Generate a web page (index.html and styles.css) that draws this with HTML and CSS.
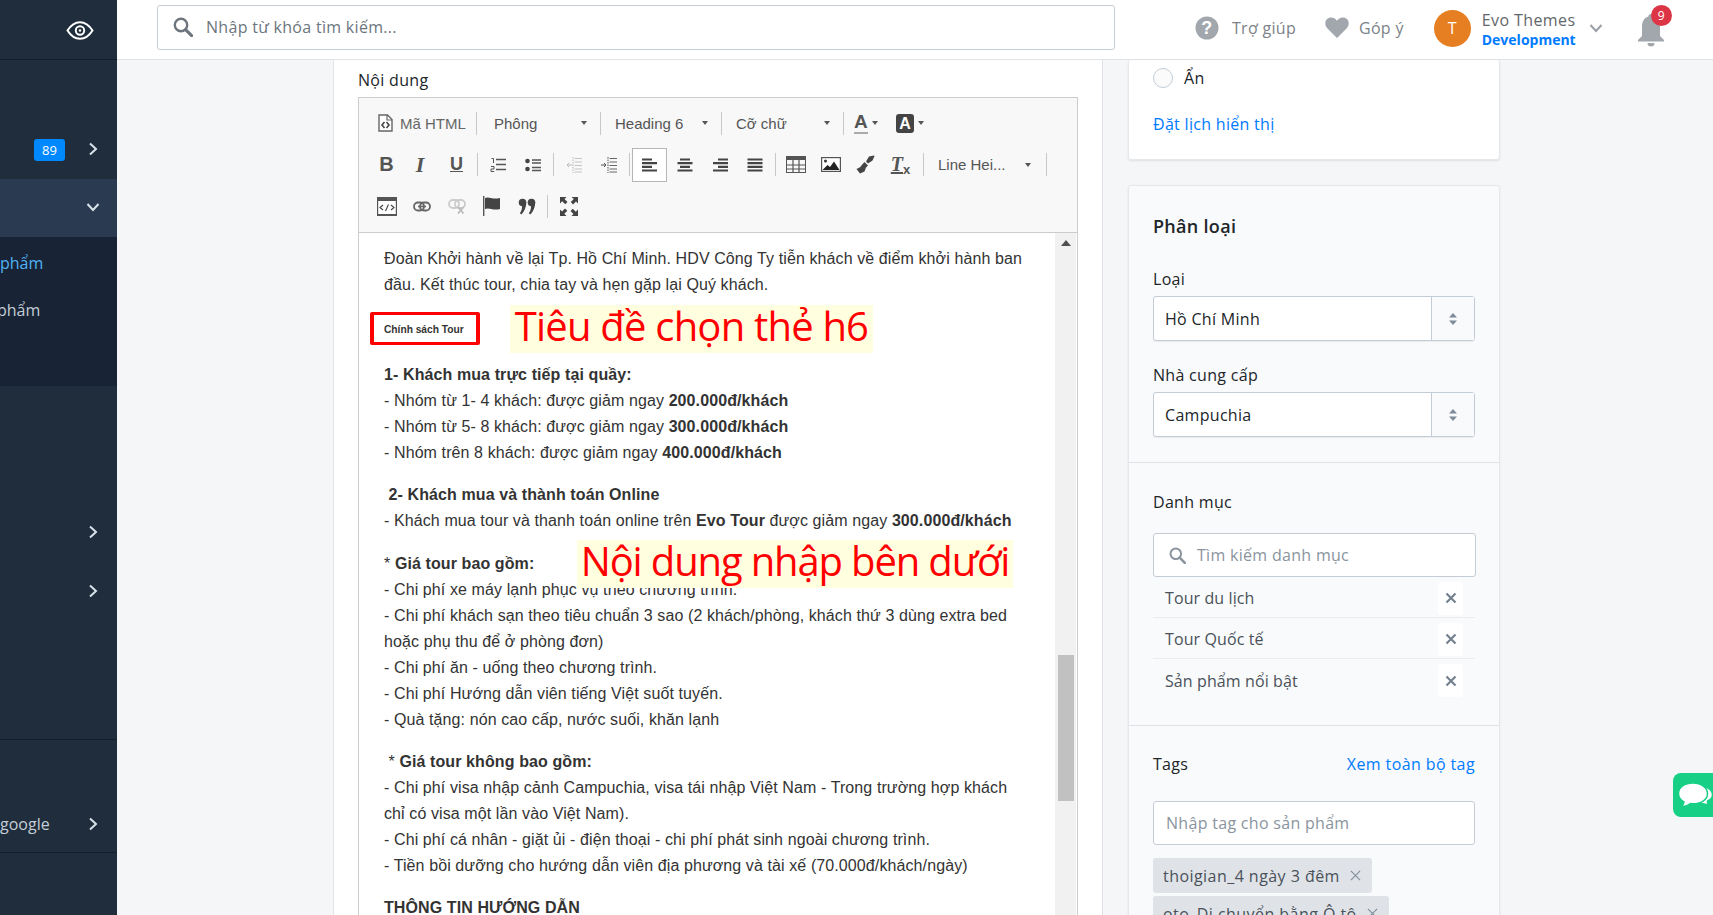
FILE: index.html
```html
<!DOCTYPE html>
<html lang="vi">
<head>
    <meta charset="UTF-8">
    <meta name="viewport" content="width=device-width, initial-scale=1.0">
    <title>Evo Themes</title>
    <link rel="stylesheet" href="styles.css">
</head>
<body>
    <svg class="defs" width="0" height="0">
        <symbol id="i-search" viewBox="0 0 20 20"><circle cx="8" cy="8" r="6.2" fill="none" stroke="currentColor" stroke-width="2.4"/><path d="M12.6 12.6l6 6" stroke="currentColor" stroke-width="3" stroke-linecap="round"/></symbol>
        <symbol id="i-right" viewBox="0 0 10 14"><path d="M2 1.5L8 7l-6 5.500" fill="none" stroke="currentColor" stroke-width="2"/></symbol>
        <symbol id="i-down" viewBox="0 0 14 10"><path d="M1.500 2L7 8l5.500-6" fill="none" stroke="currentColor" stroke-width="2"/></symbol>
        <symbol id="i-updown" viewBox="0 0 8 12"><path d="M4 0l4 4.500H0zM4 12L0 7.500h8z" fill="currentColor"/></symbol>
        <symbol id="i-close" viewBox="0 0 12 12"><path d="M1.500 1.500l9 9M10.500 1.500l-9 9" stroke="currentColor" stroke-width="2.200"/></symbol>
    </svg>

    <div class="app">
        <aside class="sidebar">
            <div class="side-top">
                <svg width="28" height="19" viewBox="0 0 28 19"><path d="M1.500 9.500C5 4 9 1.200 14 1.200S23 4 26.500 9.500C23 15 19 17.800 14 17.800S5 15 1.500 9.500z" fill="none" stroke="#fff" stroke-width="2"/><circle cx="14" cy="9.500" r="4.200" fill="none" stroke="#fff" stroke-width="2"/><circle cx="14" cy="9.500" r="1.300" fill="#fff"/></svg>
            </div>
            <div class="nav-row nav-blank"></div>
            <div class="nav-row"><span class="nav-badge">89</span><svg class="nav-arrow" width="10" height="14"><use href="#i-right"/></svg></div>
            <div class="nav-row nav-active"><svg class="nav-arrow nav-arrow-down" width="14" height="10"><use href="#i-down"/></svg></div>
            <div class="nav-sub">
                <div class="sub-item sub-current">phẩm</div>
                <div class="sub-item sub-cut">phẩm</div>
            </div>
            <div class="nav-gap"></div>
            <div class="nav-row nav-tall"><svg class="nav-arrow" width="10" height="14"><use href="#i-right"/></svg></div>
            <div class="nav-row nav-tall"><svg class="nav-arrow" width="10" height="14"><use href="#i-right"/></svg></div>
            <div class="nav-gap nav-line"></div>
            <div class="nav-row nav-google"><span class="nav-text">google</span><svg class="nav-arrow" width="10" height="14"><use href="#i-right"/></svg></div>
        </aside>

        <div class="main">
            <header class="topbar">
                <div class="search-box">
                    <svg width="20" height="20"><use href="#i-search"/></svg>
                    <span>Nhập từ khóa tìm kiếm...</span>
                </div>
                <div class="top-link top-help">
                    <svg width="24" height="24" viewBox="0 0 24 24"><circle cx="12" cy="12" r="11.500" fill="#a2a7ad"/><text x="12" y="18" text-anchor="middle" class="help-mark">?</text></svg>
                    <span>Trợ giúp</span>
                </div>
                <div class="top-link top-feedback">
                    <svg width="24" height="21" viewBox="0 0 24 21"><path d="M12 21L2.500 11.500C-.5 8.500-.3 4 2.300 1.800 5 -.4 9.500 0 12 3.800 14.500 0 19 -.4 21.700 1.800 24.300 4 24.500 8.500 21.500 11.500z" fill="#a2a7ad"/></svg>
                    <span>Góp ý</span>
                </div>
                <div class="avatar">T</div>
                <div class="user">
                    <div class="user-name">Evo Themes</div>
                    <div class="user-env">Development</div>
                </div>
                <svg class="user-arrow" width="14" height="10"><use href="#i-down"/></svg>
                <div class="bell">
                    <svg width="26" height="33" viewBox="0 0 26 33"><path d="M13 0a2.600 2.600 0 0 1 2.600 2.600C20.500 4 22 8.500 22 13v9l4 4v1.500H0V26l4-4v-9C4 8.500 5.500 4 10.400 2.600A2.600 2.600 0 0 1 13 0z" fill="#a2a7ad"/><path d="M9.500 29h7a3.500 3.500 0 0 1-7 0z" fill="#a2a7ad"/></svg>
                    <span class="bell-count">9</span>
                </div>
            </header>

            <div class="content">
                <section class="left-card">
                    <label class="field-label">Nội dung</label>
                    <div class="editor">
                        <div class="toolbar">
                            <div class="tool-row">
                                <button class="tool-html">
                                    <svg width="15" height="18" viewBox="0 0 15 18"><path d="M1 1h8.500L14 5.500V17H1z" fill="#fff" stroke="#666" stroke-width="1.400"/><path d="M9 1v5h5" fill="none" stroke="#666" stroke-width="1.200"/><path d="M6.500 8L4 11l2.500 3M8.500 8L11 11l-2.500 3" fill="none" stroke="#444" stroke-width="1.600"/></svg>
                                    <span>Mã HTML</span>
                                </button>
                                <i class="sep"></i>
                                <button class="tool-drop drop-font"><span>Phông</span><b class="caret"></b></button>
                                <i class="sep"></i>
                                <button class="tool-drop drop-style"><span>Heading 6</span><b class="caret"></b></button>
                                <i class="sep"></i>
                                <button class="tool-drop drop-size"><span>Cỡ chữ</span><b class="caret"></b></button>
                                <i class="sep"></i>
                                <button class="tool-color"><span class="color-a">A</span><b class="caret"></b></button>
                                <button class="tool-color"><span class="color-bg">A</span><b class="caret"></b></button>
                            </div>
                            <div class="tool-row tool-row-mid">
                                <button class="tool-btn tf-b">B</button>
                                <button class="tool-btn tf-i">I</button>
                                <button class="tool-btn tf-u">U</button>
                                <i class="sep"></i>
                                <button class="tool-btn">
                                    <svg width="16" height="16" viewBox="0 0 16 16"><path d="M6 2.500h10M6 7.500h10M6 12.500h10" stroke="#555" stroke-width="1.600"/><path d="M1.500 1.500h2v4.500M1 9.500h3v2.500H1v2.500h3.200" fill="none" stroke="#555" stroke-width="1"/></svg>
                                </button>
                                <button class="tool-btn">
                                    <svg width="16" height="14" viewBox="0 0 16 14"><circle cx="2.500" cy="3" r="2.300" fill="#444"/><circle cx="2.500" cy="11" r="2.300" fill="#444"/><path d="M7 2h9M7 5h9M7 9.500h9M7 12.500h9" stroke="#555" stroke-width="1.500"/></svg>
                                </button>
                                <i class="sep"></i>
                                <button class="tool-btn">
                                    <svg width="16" height="18" viewBox="0 0 16 18"><path d="M7 1v16" stroke="#bbb" stroke-dasharray="1.500 1" fill="none"/><path d="M8.500 2.500H16M8.500 6H16M8.500 9.500H16M8.500 13H16M8.500 16H16" stroke="#c4c4c4" stroke-width="1.200"/><path d="M6 9H1M3 7L1 9l2 2" fill="none" stroke="#bbb" stroke-width="1"/></svg>
                                </button>
                                <button class="tool-btn">
                                    <svg width="16" height="18" viewBox="0 0 16 18"><path d="M7 1v16" stroke="#555" stroke-dasharray="1.500 1" fill="none"/><path d="M8.500 2.500H16M8.500 6H16M8.500 9.500H16M8.500 13H16M8.500 16H16" stroke="#666" stroke-width="1.200"/><path d="M0 9h5M3 7l2 2-2 2" fill="none" stroke="#555" stroke-width="1"/></svg>
                                </button>
                                <i class="sep"></i>
                                <button class="tool-btn tool-on">
                                    <svg width="16" height="14" viewBox="0 0 16 14"><path d="M0 1.500h10M0 5.200h15M0 8.800h10M0 12.500h15" stroke="#444" stroke-width="2.200"/></svg>
                                </button>
                                <button class="tool-btn">
                                    <svg width="16" height="14" viewBox="0 0 16 14"><path d="M3 1.500h10M.5 5.200h15M3 8.800h10M.5 12.500h15" stroke="#444" stroke-width="2.200"/></svg>
                                </button>
                                <button class="tool-btn">
                                    <svg width="16" height="14" viewBox="0 0 16 14"><path d="M6 1.500h10M1 5.200h15M6 8.800h10M1 12.500h15" stroke="#444" stroke-width="2.200"/></svg>
                                </button>
                                <button class="tool-btn">
                                    <svg width="16" height="14" viewBox="0 0 16 14"><path d="M.5 1.500h15M.5 5.200h15M.5 8.800h15M.5 12.500h15" stroke="#444" stroke-width="2.200"/></svg>
                                </button>
                                <i class="sep"></i>
                                <button class="tool-btn">
                                    <svg width="20" height="17" viewBox="0 0 20 17"><rect x=".5" y=".5" width="19" height="16" fill="none" stroke="#555"/><path d="M0 0h20v4H0z" fill="#555"/><path d="M0 9h20M0 13h20M7 4v13M13 4v13" stroke="#555" stroke-width="1.200"/></svg>
                                </button>
                                <button class="tool-btn">
                                    <svg width="20" height="15" viewBox="0 0 20 15"><rect x=".6" y=".6" width="18.800" height="13.800" fill="#fff" stroke="#555" stroke-width="1.200"/><circle cx="4.500" cy="4" r="1.500" fill="#333"/><path d="M1.500 13l5-5 2.500 2 4-5.500 5.500 8.500z" fill="#222"/></svg>
                                </button>
                                <button class="tool-btn">
                                    <svg width="19" height="19" viewBox="0 0 19 19"><path d="M13 1.500L18 .5l.5.5-2 4.500-4.500 3-2-2z" fill="#444"/><path d="M8.500 7l3.500 3.500-2 2-1.500 4-4.500 2L.5 14l3.500-1.800 2.500-3z" fill="#444"/></svg>
                                </button>
                                <button class="tool-btn tf-clear"><span class="clear-t">T</span><span class="clear-x">x</span></button>
                                <i class="sep"></i>
                                <button class="tool-drop drop-height"><span>Line Hei...</span><b class="caret"></b></button>
                                <i class="sep"></i>
                            </div>
                            <div class="tool-row">
                                <button class="tool-btn">
                                    <svg width="20" height="19" viewBox="0 0 20 19"><rect x=".6" y=".6" width="18.800" height="17.800" fill="#fff" stroke="#555" stroke-width="1.200"/><path d="M0 0h20v4H0zM0 17h20v2H0z" fill="#555"/><path d="M6 8l-3 2.500L6 13M14 8l3 2.500L14 13M11.500 7.500l-3 6.500" fill="none" stroke="#444" stroke-width="1.100"/></svg>
                                </button>
                                <button class="tool-btn">
                                    <svg width="18" height="11" viewBox="0 0 18 11"><rect x="1" y="1.500" width="10" height="8" rx="4" fill="none" stroke="#666" stroke-width="1.800"/><rect x="7" y="1.500" width="10" height="8" rx="4" fill="none" stroke="#666" stroke-width="1.800"/><path d="M5 5.500h8" stroke="#666" stroke-width="1.600"/></svg>
                                </button>
                                <button class="tool-btn">
                                    <svg width="18" height="15" viewBox="0 0 18 15"><rect x="1" y="1" width="10" height="8" rx="4" fill="none" stroke="#ccc" stroke-width="1.800"/><rect x="7" y="1" width="10" height="8" rx="4" fill="none" stroke="#ccc" stroke-width="1.800"/><path d="M10 8l5.500 6.500M15.500 8L10 14.500" stroke="#bbb" stroke-width="1.800"/></svg>
                                </button>
                                <button class="tool-btn">
                                    <svg width="17" height="20" viewBox="0 0 17 20"><path d="M.7 0v20" stroke="#555" stroke-width="1.400"/><path d="M2 2c4-2 7 2 15 0v11c-7 2-11-2-15 0z" fill="#444"/></svg>
                                </button>
                                <button class="tool-btn">
                                    <svg width="18" height="17" viewBox="0 0 19 19"><circle cx="4.500" cy="5" r="4.200" fill="#444"/><path d="M8.700 5c0 5-2 10-5.500 13.500L1.500 17c2-2.500 2.500-5 2.500-8z" fill="#444"/><circle cx="14.500" cy="5" r="4.200" fill="#444"/><path d="M18.700 5c0 5-2 10-5.500 13.500L11.500 17c2-2.500 2.500-5 2.500-8z" fill="#444"/></svg>
                                </button>
                                <i class="sep"></i>
                                <button class="tool-btn">
                                    <svg width="18" height="19" viewBox="0 0 18 19"><path d="M0 0h6.500L4.500 2l3 3-2.300 2.300-3-3L0 6.500zM18 0v6.500l-2-2-3 3L10.800 5l3-3L11.500 0zM0 19v-6.500l2 2 3-3 2.300 2.300-3 3 2.200 2.200zM18 19h-6.500l2-2-3-3 2.300-2.300 3 3 2.200-2.200z" fill="#444"/></svg>
                                </button>
                            </div>
                        </div>

                        <div class="editor-body">
                            <div class="doc">
                                <p>Đoàn Khởi hành về lại Tp. Hồ Chí Minh. HDV Công Ty tiễn khách về điểm khởi hành ban đầu. Kết thúc tour, chia tay và hẹn gặp lại Quý khách.</p>
                                <h6>Chính sách Tour</h6>
                                <p><b>1- Khách mua trực tiếp tại quầy:</b><br>
                                - Nhóm từ 1- 4 khách: được giảm ngay <b>200.000đ/khách</b><br>
                                - Nhóm từ 5- 8 khách: được giảm ngay <b>300.000đ/khách</b><br>
                                - Nhóm trên 8 khách: được giảm ngay <b>400.000đ/khách</b></p>
                                <p class="doc-wide"><b>&nbsp;2- Khách mua và thành toán Online</b><br>
                                - Khách mua tour và thanh toán online trên <b>Evo Tour</b> được giảm ngay <b>300.000đ/khách</b></p>
                                <p>* <b>Giá tour bao gồm:</b><br>
                                - Chi phí xe máy lạnh phục vụ theo chương trình.<br>
                                - Chi phí khách sạn theo tiêu chuẩn 3 sao (2 khách/phòng, khách thứ 3 dùng extra bed hoặc phụ thu để ở phòng đơn)<br>
                                - Chi phí ăn - uống theo chương trình.<br>
                                - Chi phí Hướng dẫn viên tiếng Việt suốt tuyến.<br>
                                - Quà tặng: nón cao cấp, nước suối, khăn lạnh</p>
                                <p>&nbsp;* <b>Giá tour không bao gồm:</b><br>
                                - Chi phí visa nhập cảnh Campuchia, visa tái nhập Việt Nam - Trong trường hợp khách chỉ có visa một lần vào Việt Nam).<br>
                                - Chi phí cá nhân - giặt ủi - điện thoại - chi phí phát sinh ngoài chương trình.<br>
                                - Tiền bồi dưỡng cho hướng dẫn viên địa phương và tài xế (70.000đ/khách/ngày)</p>
                                <p><b>THÔNG TIN HƯỚNG DẪN</b></p>
                            </div>
                            <div class="scroll-track">
                                <b class="scroll-up"></b>
                                <div class="scroll-thumb"></div>
                            </div>
                            <div class="mark-box"></div>
                            <div class="mark-note mark-h6">Tiêu đề chọn thẻ h6</div>
                            <div class="mark-note mark-body">Nội dung nhập bên dưới</div>
                        </div>
                    </div>
                </section>

                <aside class="right-col">
                    <section class="card card-visible">
                        <div class="radio-row"><i class="radio"></i><span>Ẩn</span></div>
                        <a class="link schedule">Đặt lịch hiển thị</a>
                    </section>

                    <section class="card card-type">
                        <div class="block">
                            <h2 class="block-title">Phân loại</h2>
                            <div class="block-label label-type">Loại</div>
                            <div class="select-box">
                                <span class="select-value">Hồ Chí Minh</span>
                                <span class="select-arrows"><svg width="8" height="12"><use href="#i-updown"/></svg></span>
                            </div>
                            <div class="block-label label-vendor">Nhà cung cấp</div>
                            <div class="select-box">
                                <span class="select-value">Campuchia</span>
                                <span class="select-arrows"><svg width="8" height="12"><use href="#i-updown"/></svg></span>
                            </div>
                        </div>

                        <div class="block block-cats">
                            <div class="block-head">Danh mục</div>
                            <div class="text-box cat-search">
                                <svg width="17" height="17"><use href="#i-search"/></svg>
                                <span>Tìm kiếm danh mục</span>
                            </div>
                            <div class="cat-row"><span>Tour du lịch</span><span class="cat-remove"><svg width="12" height="12"><use href="#i-close"/></svg></span></div>
                            <div class="cat-row"><span>Tour Quốc tế</span><span class="cat-remove"><svg width="12" height="12"><use href="#i-close"/></svg></span></div>
                            <div class="cat-row cat-last"><span>Sản phẩm nổi bật</span><span class="cat-remove"><svg width="12" height="12"><use href="#i-close"/></svg></span></div>
                        </div>

                        <div class="block block-tags">
                            <div class="block-head tags-head"><span>Tags</span><a class="link">Xem toàn bộ tag</a></div>
                            <div class="text-box tag-input">Nhập tag cho sản phẩm</div>
                            <div class="tag-list">
                                <span class="tag">thoigian_4 ngày 3 đêm<svg width="11" height="11" viewBox="0 0 12 12"><path d="M1 1l10 10M11 1L1 11" stroke="currentColor" stroke-width="1.200"/></svg></span>
                                <span class="tag">oto_Di chuyển bằng Ô tô<svg width="11" height="11" viewBox="0 0 12 12"><path d="M1 1l10 10M11 1L1 11" stroke="currentColor" stroke-width="1.200"/></svg></span>
                            </div>
                        </div>
                    </section>
                </aside>
            </div>
        </div>
    </div>

    <div class="chat-tab">
        <svg width="40" height="32" viewBox="0 0 40 32"><path d="M22 14c0 2-.5 4-3 6.500 5 1 9 1 13 3 -1-1.500-2-3-1.500-4.500 3-1 5-3.500 5-6.500 0-4-4-7-8-7.500z" fill="#fff" stroke="#17d085" stroke-width="1.500"/><path d="M16 1C7.500 1 1.500 5.500 1.500 11.500c0 3.500 2 6.500 5.500 8.500-.3 2-1.500 3.700-3 5 4-.3 7-1.500 9.500-3.500 1 .2 2 .3 3 .3 8 0 14-4.500 14-10.300S24.500 1 16 1z" fill="#fff" stroke="#17d085" stroke-width="1.500"/></svg>
    </div>
</body>
</html>
```
FILE: styles.css
```css
* {
    box-sizing: border-box;
}

html, body {
    height: 100%;
    margin: 0;
    overflow: hidden;
}

body {
    font-family: "Open Sans", "Noto Sans", sans-serif;
    font-size: 15px;
    letter-spacing: 0.3px;
    color: #212529;
    background-color: #f4f6f8;
}

.defs {
    position: absolute;
}

.app {
    display: flex;
    height: 915px;
}

/* sidebar */
.sidebar {
    width: 117px;
    flex-shrink: 0;
    background-color: #1f2d3d;
    color: #c4cdd5;
    overflow: hidden;
    letter-spacing: 0;
}

.side-top {
    height: 60px;
    display: flex;
    align-items: center;
    padding: 2px 23px 0 0;
    justify-content: flex-end;
    border-bottom: 1px solid #131e2b;
}

.nav-row {
    height: 58px;
    display: flex;
    align-items: center;
    justify-content: flex-end;
    padding-right: 19px;
}

.nav-blank {
    height: 60px;
}

.nav-badge {
    width: 31px;
    height: 22px;
    margin: 2px 23px 0 0;
    background-color: #0088ff;
    color: #fff;
    font-size: 13px;
    line-height: 22px;
    text-align: center;
    border-radius: 3px;
}

.nav-arrow {
    color: #d9e2ea;
}

.nav-arrow-down {
    margin: 0 -2px 2px 0;
}

.nav-active {
    margin-top: 1px;
    background-color: #2a3a50;
}

.nav-sub {
    height: 149px;
    padding-top: 5px;
    background-color: #182435;
}

.sub-item {
    height: 47px;
    line-height: 42px;
    font-size: 16px;
    white-space: nowrap;
    color: #c4cdd5;
}

.sub-current {
    color: #4fb3f6;
}

.sub-cut {
    margin-left: -3px;
}

.nav-gap {
    height: 116px;
}

.nav-tall {
    height: 59px;
}

.nav-line {
    height: 120px;
    border-bottom: 1px solid #131e2b;
    margin-bottom: 56px;
}

.nav-google {
    height: 57px;
    justify-content: space-between;
    border-bottom: 1px solid #131e2b;
}

.nav-text {
    font-size: 16px;
}

/* header */
.main {
    flex: 1;
    min-width: 0;
}

.topbar {
    height: 60px;
    display: flex;
    align-items: center;
    padding: 0 0 5px 40px;
    background-color: #fff;
    border-bottom: 1px solid #dfe3e8;
}

.search-box {
    width: 958px;
    height: 45px;
    display: flex;
    align-items: center;
    gap: 13px;
    padding-left: 15px;
    border: 1px solid #c4cdd5;
    border-radius: 3px;
    color: #6c757d;
    font-size: 16px;
}

.top-link {
    display: flex;
    align-items: center;
    color: #7c8288;
    font-size: 16px;
    margin-top: 1px;
}

.top-help {
    gap: 13px;
    margin-left: 80px;
}

.help-mark {
    font-family: "Liberation Sans", sans-serif;
    font-size: 18px;
    font-weight: 700;
    fill: #fff;
}

.top-feedback {
    gap: 10px;
    margin-left: 29px;
}

.avatar {
    width: 37px;
    height: 37px;
    margin-left: 30px;
    margin-top: 3px;
    background-color: #e67e22;
    color: #fff;
    font-size: 16px;
    line-height: 37px;
    text-align: center;
    border-radius: 50%;
}

.user {
    margin-left: 11px;
    margin-top: 3px;
}

.user-name {
    font-size: 16px;
    line-height: 22px;
    letter-spacing: 0.4px;
    color: #63676b;
}

.user-env {
    font-size: 14px;
    line-height: 18px;
    font-weight: 700;
    letter-spacing: 0;
    color: #007bff;
}

.user-arrow {
    color: #9aa0a6;
    margin-left: 13px;
    margin-top: 1px;
}

.bell {
    position: relative;
    margin-left: 35px;
    margin-top: 6px;
}

.bell svg {
    display: block;
}

.bell-count {
    position: absolute;
    top: -9px;
    right: -8px;
    width: 21px;
    height: 21px;
    background-color: #dc3545;
    color: #fff;
    font-size: 12px;
    line-height: 21px;
    letter-spacing: 0;
    text-align: center;
    border-radius: 50%;
}

/* main columns */
.content {
    display: flex;
    align-items: flex-start;
    gap: 25px;
    padding-left: 216px;
}

.left-card {
    width: 770px;
    height: 855px;
    padding: 6px 25px 0;
    background-color: #fff;
    border-left: 1px solid #e3e6e9;
    border-right: 1px solid #dfe3e8;
    overflow: hidden;
}

.field-label {
    display: block;
    margin: 0 0 2px -1px;
    font-size: 16px;
    line-height: 29px;
}

/* editor */
.editor {
    width: 720px;
    margin-left: -1px;
    border: 1px solid #ccc;
}

.toolbar {
    height: 135px;
    padding: 4px 0 0 10px;
    background-color: #f8f8f8;
    border-bottom: 1px solid #ccc;
    font-family: "Liberation Sans", sans-serif;
    font-size: 15px;
    letter-spacing: 0;
    color: #555;
}

.tool-row {
    display: flex;
    align-items: center;
    height: 42px;
}

.tool-row-mid {
    height: 41px;
}

.toolbar button {
    height: 32px;
    display: flex;
    align-items: center;
    padding: 0;
    background: none;
    border: 1px solid transparent;
    font: inherit;
    color: inherit;
}

.sep {
    width: 1px;
    height: 23px;
    background-color: #c8c8c8;
    flex-shrink: 0;
}

.toolbar .tool-btn {
    width: 35px;
    justify-content: center;
    flex-shrink: 0;
}

.tool-row-mid .sep {
    margin: 0 2.500px;
}

.tool-row:last-child .sep {
    margin: 0 3px;
}

.toolbar .tool-on {
    height: 34px;
    background-color: #fff;
    border-color: #b5b5b5;
}

.toolbar .tf-b {
    font-size: 20px;
    font-weight: 700;
}

.toolbar .tf-i {
    font-family: "Liberation Serif", serif;
    font-size: 22px;
    font-weight: 700;
    font-style: italic;
    padding-right: 3px;
}

.toolbar .tf-u {
    font-size: 18px;
    font-weight: 700;
    text-decoration: underline;
}

.toolbar .tf-clear {
    width: 37px;
    padding-right: 2px;
    font-family: "Liberation Serif", serif;
    color: #555;
}

.clear-t {
    font-size: 20px;
    font-weight: 700;
    font-style: italic;
    text-decoration: underline;
}

.clear-x {
    font-family: "Liberation Sans", sans-serif;
    font-size: 13px;
    font-weight: 700;
    margin-top: 10px;
}

.toolbar .tool-html {
    width: 107px;
    gap: 7px;
    padding-left: 8px;
    color: #666;
}

.toolbar .tool-drop {
    justify-content: space-between;
    padding-right: 12px;
}

.toolbar .drop-font {
    width: 123px;
    padding-left: 16px;
}

.toolbar .drop-style {
    width: 120px;
    padding-left: 13px;
}

.toolbar .drop-size {
    width: 121px;
    padding-left: 13px;
}

.toolbar .drop-height {
    width: 117px;
    padding-left: 11px;
    padding-right: 11px;
}

.caret {
    width: 0;
    height: 0;
    border-top: 4px solid #555;
    border-left: 3.500px solid transparent;
    border-right: 3.500px solid transparent;
}

.toolbar .tool-color {
    width: 42px;
    gap: 4px;
    padding-left: 9px;
}

.toolbar .tool-color + .tool-color {
    width: 42px;
    padding-left: 9px;
}

.color-a {
    font-size: 19px;
    font-weight: 700;
    line-height: 20px;
    border-bottom: 2px solid #aaa;
}

.color-bg {
    width: 18px;
    height: 19px;
    background-color: #444;
    color: #fff;
    font-size: 16px;
    font-weight: 700;
    line-height: 19px;
    text-align: center;
    border-radius: 3px;
}

.editor-body {
    position: relative;
    display: flex;
    height: 760px;
    background-color: #fff;
}

.doc {
    flex: 1;
    padding: 13px 30px 0 25px;
    font-family: "Liberation Sans", Arial, sans-serif;
    font-size: 16px;
    line-height: 26px;
    letter-spacing: 0.1px;
    color: #333;
}

.doc p {
    margin: 0 0 16px;
}

.doc .doc-wide {
    margin-bottom: 17px;
}

.doc h6 {
    margin: 0 0 16px;
    font-size: 10.200px;
    line-height: 32px;
    letter-spacing: 0;
}

.scroll-track {
    position: relative;
    width: 21px;
    margin-right: 1px;
    background-color: #f1f1f1;
}

.scroll-up {
    display: block;
    width: 0;
    margin: 7px auto 0;
    border-bottom: 6px solid #505050;
    border-left: 5px solid transparent;
    border-right: 5px solid transparent;
}

.scroll-thumb {
    position: absolute;
    top: 422px;
    left: 3px;
    width: 16px;
    height: 146px;
    background-color: #c1c1c1;
}

/* annotations drawn over the screenshot */
.mark-box {
    position: absolute;
    top: 79px;
    left: 11px;
    width: 110px;
    height: 33px;
    border-style: solid;
    border-color: #f00;
    border-width: 3px 4px;
    border-radius: 2px;
}

.mark-note {
    position: absolute;
    height: 48px;
    font-family: "Open Sans", sans-serif;
    font-size: 40px;
    line-height: 42px;
    color: #f00;
    background-color: #ffffe0;
    white-space: nowrap;
    text-align: center;
}

.mark-h6 {
    top: 72px;
    left: 151px;
    width: 363px;
    letter-spacing: -0.8px;
}

.mark-body {
    top: 307px;
    left: 218px;
    width: 436px;
    letter-spacing: -1.150px;
}

/* right column */
.right-col {
    width: 372px;
    flex-shrink: 0;
}

.card {
    border: 1px solid #e6e9ec;
    border-radius: 3px;
    box-shadow: 0 1px 2px rgba(63, 63, 68, 0.12);
}

.card-visible {
    height: 100px;
    padding: 5px 24px 0;
    background-color: #fff;
    border-top: none;
}

.radio-row {
    display: flex;
    align-items: center;
    gap: 11px;
    height: 26px;
    font-size: 16px;
}

.radio {
    width: 20px;
    height: 20px;
    border: 1px solid #c4cdd5;
    border-radius: 50%;
    background-color: #fbfbfc;
}

.link {
    color: #007bff;
}

.schedule {
    display: block;
    margin-top: 20px;
    font-size: 16px;
    line-height: 26px;
}

.card-type {
    margin-top: 25px;
    background-color: #f9fafb;
}

.block {
    padding: 27px 24px 25px;
    border-bottom: 1px solid #dfe3e8;
}

.block-title {
    margin: 0;
    font-size: 18px;
    font-weight: 600;
    line-height: 26px;
}

.block-label {
    font-size: 16px;
    line-height: 26px;
    margin-bottom: 4px;
}

.label-type {
    margin-top: 27px;
}

.label-vendor {
    margin-top: 21px;
}

.select-box {
    display: flex;
    height: 45px;
    background-color: #fff;
    border: 1px solid #c4cdd5;
    border-radius: 3px;
    box-shadow: 0 1px 1px rgba(63, 63, 68, 0.08);
    font-size: 16px;
}

.select-value {
    flex: 1;
    padding-left: 11px;
    line-height: 44px;
}

.select-arrows {
    width: 43px;
    display: flex;
    align-items: center;
    justify-content: center;
    color: #7f8c99;
    background-color: #f9fafb;
    border-left: 1px solid #c4cdd5;
}

.block-cats {
    padding-top: 26px;
    padding-bottom: 25px;
}

.block-tags {
    padding-top: 25px;
}

.block-head {
    font-size: 16px;
    line-height: 26px;
}

.tags-head .link {
    letter-spacing: 0.4px;
}

.text-box {
    height: 44px;
    background-color: #fff;
    border: 1px solid #c4cdd5;
    border-radius: 3px;
    color: #8a949e;
    font-size: 16px;
}

.cat-search {
    display: flex;
    align-items: center;
    gap: 11px;
    width: 323px;
    margin-top: 18px;
    padding-left: 15px;
}

.cat-row {
    display: flex;
    align-items: center;
    justify-content: space-between;
    height: 41px;
    padding: 2px 12px 0;
    border-bottom: 1px solid #eaedf0;
    font-size: 16px;
    letter-spacing: 0.1px;
    color: #4a5159;
}

.cat-last {
    border-bottom: none;
}

.cat-remove {
    width: 25px;
    height: 33px;
    display: flex;
    align-items: center;
    justify-content: center;
    background-color: #fff;
    color: #73808d;
    border-radius: 3px;
}

.tags-head {
    display: flex;
    justify-content: space-between;
}

.tag-input {
    margin-top: 24px;
    padding-left: 12px;
    line-height: 42px;
}

.tag-list {
    margin-top: 13px;
    display: flex;
    flex-direction: column;
    align-items: flex-start;
    gap: 3px;
}

.tag {
    display: flex;
    align-items: center;
    gap: 10px;
    height: 35px;
    padding: 0 11px 0 10px;
    background-color: #dfe3e8;
    border-radius: 3px;
    font-size: 16px;
    letter-spacing: 0.45px;
    color: #4a5159;
}

.tag svg {
    color: #7f8c99;
}

.chat-tab {
    position: fixed;
    top: 773px;
    left: 1673px;
    width: 40px;
    height: 44px;
    padding: 9px 0 0 4px;
    background-color: #17d085;
    border-radius: 8px 0 0 8px;
    overflow: hidden;
}
```
